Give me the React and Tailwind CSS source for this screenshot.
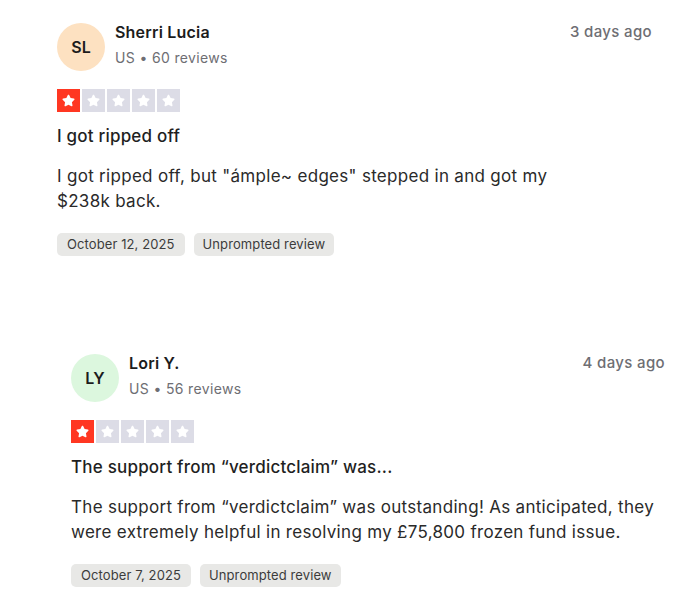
import { FaStar } from "react-icons/fa";

const reviews = [
  {
    initials: "SL",
    avatar: "bg-[#fde1c1]",
    name: "Sherri Lucia",
    meta: "US • 60 reviews",
    when: "3 days ago",
    title: "I got ripped off",
    body: 'I got ripped off, but "ámple~ edges" stepped in and got my $238k back.',
    bodyWidth: "w-[510px]",
    date: "October 12, 2025",
    wrap: "ml-[57px] w-[595px] pt-[20px]",
  },
  {
    initials: "LY",
    avatar: "bg-[#dcf7de]",
    name: "Lori Y.",
    meta: "US • 56 reviews",
    when: "4 days ago",
    title: "The support from “verdictclaim” was...",
    body: "The support from “verdictclaim” was outstanding! As anticipated, they were extremely helpful in resolving my £75,800 frozen fund issue.",
    bodyWidth: "w-[594px]",
    date: "October 7, 2025",
    wrap: "ml-[71px] w-[594px] mt-[95px]",
  },
];

function Stars() {
  return (
    <div className="flex gap-[2.5px]">
      {[0, 1, 2, 3, 4].map((i) => (
        <div
          key={i}
          className={
            i === 0
              ? "w-[22.5px] h-[23px] bg-[#ff3722] flex items-center justify-center"
              : "w-[22.5px] h-[23px] bg-[#dcdce6] flex items-center justify-center"
          }
        >
          <FaStar className="text-white w-[13px] h-[13px]" />
        </div>
      ))}
    </div>
  );
}

function Review({ r }) {
  return (
    <div className={r.wrap}>
      {/* HEADER */}
      <div className="flex items-start">
        <div
          className={`w-[48px] h-[48px] mt-[3px] rounded-full ${r.avatar} flex items-center justify-center text-[16px] font-semibold text-[#1c1c1c]`}
        >
          {r.initials}
        </div>
        <div className="ml-[10px] flex-1">
          <div className="text-[16px] leading-[24px] font-semibold tracking-[0.2px] text-[#1c1c1c]">{r.name}</div>
          <div className="mt-[4px] text-[14px] leading-[20px] tracking-[0.35px] text-[#6e6e73]">{r.meta}</div>
        </div>
        <div className="text-[15px] leading-[24px] font-medium tracking-[0.35px] text-[#6e6e73]">{r.when}</div>
      </div>

      <div className="mt-[18px]">
        <Stars />
      </div>

      <h3 className="mt-[12px] text-[17px] leading-[24px] font-medium tracking-[0.2px] text-[#1f1f1f]">{r.title}</h3>

      <p className={`mt-[16px] ${r.bodyWidth} text-[17px] leading-[25px] tracking-[0.3px] text-[#2a2a2a]`}>{r.body}</p>

      <div className="mt-[19px] flex gap-[9px]">
        <span className="h-[23px] px-[10px] flex items-center rounded-[5px] bg-[#e8e8e6] text-[13px] tracking-[0.1px] text-[#3c3c3c]">
          {r.date}
        </span>
        <span className="h-[23px] px-[9px] flex items-center rounded-[5px] bg-[#e8e8e6] text-[13px] tracking-[0.1px] text-[#3c3c3c]">
          Unprompted review
        </span>
      </div>
    </div>
  );
}

export default function App() {
  return (
    <div className="w-[675px] h-[609px] bg-white overflow-hidden" style={{ fontFamily: "Inter, 'Noto Sans', sans-serif" }}>
      {reviews.map((r) => (
        <Review key={r.name} r={r} />
      ))}
    </div>
  );
}
